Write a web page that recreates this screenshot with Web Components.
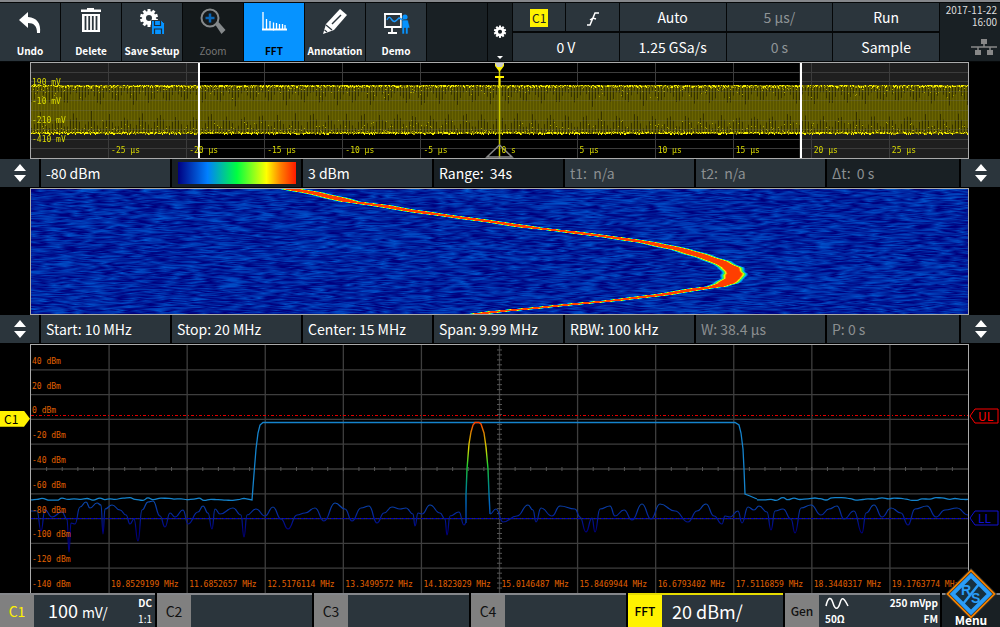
<!DOCTYPE html>
<html lang="en">
<head>
<meta charset="utf-8">
<meta name="viewport" content="width=device-width, initial-scale=1">
<title>Oscilloscope</title>
<style>
	:root {
		--panel: #2b353c;
		--panel-dark: #192024;
		--line: #85878b;
		--accent: #0693ff;
		--yellow: #fff200;
		--ui: "Noto Sans CJK SC", "Open Sans", sans-serif;
		--mono: "DejaVu Sans Mono", monospace;
	}
	body {
		margin: 0;
		background: #000;
		color: #fff;
		font-family: var(--ui);
	}
	channel-tab small { font-size: 14px; }
</style>
</head>
<body>
<scope-screen>
	<tool-bar slot="top">
		<tool-button icon="undo">Undo</tool-button>
		<tool-button icon="trash">Delete</tool-button>
		<tool-button icon="save">Save Setup</tool-button>
		<tool-button icon="zoom" disabled>Zoom</tool-button>
		<tool-button icon="fft" active>FFT</tool-button>
		<tool-button icon="pencil">Annotation</tool-button>
		<tool-button icon="demo">Demo</tool-button>
		<span></span>
		<tool-button icon="gear" aria-label="Toolbar settings"></tool-button>
		<scope-status></scope-status>
		<scope-clock date="2017-11-22" time="16:00"></scope-clock>
	</tool-bar>

	<overview-plot slot="overview"></overview-plot>

	<value-bar slot="levels">
		<value-cell>-80 dBm</value-cell>
		<value-cell scale dark></value-cell>
		<value-cell>3 dBm</value-cell>
		<value-cell dark>Range:&nbsp; 34s</value-cell>
		<value-cell muted>t1:&nbsp; n/a</value-cell>
		<value-cell muted>t2:&nbsp; n/a</value-cell>
		<value-cell muted dark>Δt:&nbsp; 0 s</value-cell>
	</value-bar>

	<waterfall-plot slot="waterfall"></waterfall-plot>

	<value-bar slot="span">
		<value-cell>Start: 10 MHz</value-cell>
		<value-cell>Stop: 20 MHz</value-cell>
		<value-cell>Center: 15 MHz</value-cell>
		<value-cell>Span: 9.99 MHz</value-cell>
		<value-cell>RBW: 100 kHz</value-cell>
		<value-cell muted>W: 38.4 µs</value-cell>
		<value-cell muted>P: 0 s</value-cell>
	</value-bar>

	<spectrum-plot slot="spectrum"></spectrum-plot>

	<channel-bar slot="bottom">
		<channel-tab name="C1" lit>
			<span>100 <small>mV/</small></span>
			<span slot="side">DC</span><span slot="side-sub">1:1</span>
		</channel-tab>
		<channel-tab name="C2"></channel-tab>
		<channel-tab name="C3"></channel-tab>
		<channel-tab name="C4"></channel-tab>
		<channel-tab name="FFT" active><span>20 dBm/</span></channel-tab>
		<channel-tab name="Gen" generator></channel-tab>
		<menu-button>Menu</menu-button>
	</channel-bar>
</scope-screen>

<script>
const GEAR = (() => {
	// ten square teeth around a ring
	let teeth = ""
	for (let i = 0; i < 10; i++) teeth += `<rect x="-1.5" y="-9" width="3" height="5" transform="rotate(${i * 36})"/>`
	return `${teeth}<circle r="5" fill="none" stroke="currentColor" stroke-width="4"/>`
})()

const ICONS = {
	undo: `<path d="M5 14 14 6v5c9 1 13 6 12 16h-3c0-7-3-10-9-10v5z" fill="currentColor"/>`,
	trash: `<path d="M6 3.5h6V2h7v1.5h7V6H6zM7 8h18v18H7z" fill="currentColor"/><path d="M10.5 10v14M14.2 10v14M17.8 10v14M21.5 10v14" stroke="var(--panel)" stroke-width="1.8"/>`,
	save: `<g transform="translate(13 12)" fill="currentColor">${GEAR}</g><path d="M15.5 14.5h10l3 3v11h-13z" fill="#0693ff" stroke="var(--panel)" stroke-width="1"/><path d="M18.5 15v4.5h6V15M18.5 28v-5h7v5" fill="none" stroke="#1d2b36" stroke-width="1.2"/>`,
	zoom: `<circle cx="13" cy="12" r="8.5" fill="none" stroke="currentColor" stroke-width="2"/><path d="M13 7.5v9M8.5 12h9" stroke="#0a66b5" stroke-width="2.5"/><path d="m18.500 19 3-3 7 8-4 4z" fill="currentColor"/>`,
	fft: `<path d="M5 6v18M8.5 13v11M12 15v9M15.5 16.5v8M18.5 17v7M21.5 18v6M24.5 18v6M27 19v5" stroke="currentColor" stroke-width="1.3"/><path d="M4 23.5h25" stroke="currentColor" stroke-width="2"/>`,
	pencil: `<path d="m4 28 3-10L21 3l7 6-13 15z" fill="currentColor"/><path d="m13 18 9-9" stroke="var(--panel)" stroke-width="1.5"/><path d="m7 19 6 5M5.5 24l2.5 2" stroke="var(--panel)" stroke-width="1.2"/>`,
	demo: `<path d="M4 8h17v13H5V8M12 21v6M8 27h9" fill="none" stroke="currentColor" stroke-width="1.8"/><path d="M7 14c2-4 3-3 5 0s4 1 7-2l6 3" fill="none" stroke="#1b9bff" stroke-width="1.5"/><circle cx="25" cy="11" r="2.6" fill="#0693ff"/><path d="M22 14h6l2 8h-2v6h-2.5v-6h-1v6H22z" fill="#0693ff" stroke="var(--panel)" stroke-width=".6"/>`,
	gear: `<g transform="translate(16 16)" fill="currentColor">${GEAR}</g>`,
	sine: `<svg width="24" height="12" viewBox="0 0 24 12" aria-hidden="true"><path d="M1 9c2-9 5-10 7-3s5 7 7 0 4-5 8 3" fill="none" stroke="currentColor" stroke-width="1.5"/></svg>`,
}

const define = (name, css, html, setup) => {
	const template = document.createElement("template")
	template.innerHTML = `<style>*{box-sizing:border-box}button{font:inherit;color:inherit;border:0;margin:0;padding:0;background:none;cursor:pointer}${css}</style>${html}`
	customElements.define(name, class extends HTMLElement {
		constructor() {
			super()
			this.attachShadow({ mode: "open" }).append(template.content.cloneNode(true))
		}
		connectedCallback() {
			setup?.(this, this.shadowRoot)
		}
	})
}

// small repeatable generator, so every load draws the same noise
const random = (seed) => () => {
	seed = (seed * 1664525 + 1013904223) >>> 0
	return seed / 4294967296
}

const lookup = (points, key, from, to) => {
	const i = Math.max(1, points.findIndex((p) => p[from] >= key))
	const a = points[i - 1]
	const b = points[i]
	return a[to] + ((b[to] - a[to]) * (key - a[from])) / (b[from] - a[from])
}

define("scope-screen", `
	:host {
		display: grid;
		min-height: 100vh;
		grid-template-rows: 62px minmax(97px, 97fr) 29px minmax(127px, 127fr) 29px minmax(249px, 249fr) 34px;
	}
`, `
	<slot name="top"></slot><slot name="overview"></slot><slot name="levels"></slot>
	<slot name="waterfall"></slot><slot name="span"></slot><slot name="spectrum"></slot><slot name="bottom"></slot>
`)

define("tool-bar", `
	:host {
		display: grid;
		grid-template-columns: repeat(8, minmax(0, 60fr)) minmax(0, 24fr) minmax(0, 426fr) minmax(0, 60fr);
		gap: 1px;
		border-top: 2px solid var(--line);
		padding-top: 1px;
		padding-bottom: 1px;
		background: #050708;
	}
	::slotted(span) { background: var(--panel-dark); }
`, `<slot></slot>`)

define("tool-button", `
	:host { display: block; min-width: 0; }
	button {
		width: 100%;
		height: 100%;
		display: flex;
		flex-direction: column;
		align-items: center;
		justify-content: space-between;
		padding: 3px 0;
		background: var(--panel);
		font-size: 10px;
		font-weight: bold;
		line-height: 14px;
		white-space: nowrap;
	}
	:host([active]) button { background: var(--accent); }
	:host([active]) .label { color: #000; }
	:host([disabled]) button { background: #14191b; color: #85898b; }
	:host([disabled]) .label { color: #777; font-weight: normal; }
	:host([icon=gear]) button { background: var(--panel-dark); justify-content: flex-end; gap: 14px; padding: 0 0 2px; }
	:host([icon=gear]) .label { width: 0; height: 0; border: 3px solid transparent; border-top-color: #fff; border-bottom: 0; }
	:host([icon=gear]) svg { width: 22px; height: 22px; flex: none; }
`, `<button type="button"><svg width="32" height="30" viewBox="0 0 32 30" aria-hidden="true"></svg><span class="label"><slot></slot></span></button>`,
(host, root) => {
	root.querySelector("svg").innerHTML = ICONS[host.getAttribute("icon")]
	root.querySelector("button").disabled = host.hasAttribute("disabled")
	if (host.ariaLabel) root.querySelector("button").ariaLabel = host.ariaLabel
})

define("scope-status", `
	:host {
		display: grid;
		grid-template: 1fr 1fr / repeat(8, 1fr);
		gap: 2px 1px;
		font-size: 14px;
	}
	button { grid-column: span 2; background: var(--panel); line-height: 20px; }
	.half { grid-column: span 1; }
	.muted { color: #8f9497; }
	b { display: inline-block; background: var(--yellow); color: #222; font-weight: normal; font-size: 12px; line-height: 18px; width: 18px; }
	svg { vertical-align: middle; }
`, `
	<button type="button" class="half" aria-label="Trigger source C1"><b>C1</b></button>
	<button type="button" class="half" aria-label="Rising edge"><svg width="12" height="14" viewBox="0 0 12 14"><path d="M0 13h3L8 1h4M3 8l3-2 3 1" fill="none" stroke="currentColor" stroke-width="1.5"/></svg></button>
	<button type="button">Auto</button>
	<button type="button" class="muted">5 µs/</button>
	<button type="button">Run</button>
	<button type="button">0 V</button>
	<button type="button">1.25 GSa/s</button>
	<button type="button" class="muted">0 s</button>
	<button type="button">Sample</button>
`)

define("scope-clock", `
	:host {
		display: flex;
		flex-direction: column;
		align-items: flex-end;
		background: var(--panel-dark);
		padding: 1px 3px 0 0;
		font-size: 10px;
		line-height: 12px;
		white-space: nowrap;
		color: #ddd;
	}
	svg { margin-top: 10px; }
`, `<span id="date"></span><span id="time"></span>
	<svg width="26" height="18" viewBox="0 0 26 18" aria-hidden="true"><path d="M10 1h6v5h-6zM4 12h6v5H4zM16 12h6v5h-6z" fill="#888"/><path d="M0 9h26M13 6v3M7 9v3M19 9v3" stroke="#888" stroke-width="1.5"/></svg>`,
(host, root) => {
	root.getElementById("date").textContent = host.getAttribute("date")
	root.getElementById("time").textContent = host.getAttribute("time")
})

const UP_DOWN = `<svg width="12" height="18" viewBox="0 0 12 18" aria-hidden="true"><path d="M6 0l6 7H0zM6 18l6-7H0z" fill="#fff"/></svg>`

define("value-bar", `
	:host {
		display: grid;
		grid-template-columns: 39px repeat(6, 129fr) 132fr 39px;
		column-gap: 2px;
		padding-bottom: 1px;
		font-size: 14px;
		line-height: 20px;
	}
	.step { background: var(--panel); display: grid; place-items: center; }
`, `<button type="button" class="step" aria-label="Move divider">${UP_DOWN}</button><slot></slot><button type="button" class="step" aria-label="Move divider">${UP_DOWN}</button>`)

define("value-cell", `
	:host { display: block; min-width: 0; }
	button { width: 100%; height: 100%; padding: 0 5px; text-align: left; background: var(--panel); white-space: nowrap; }
	:host([dark]) button { background: var(--panel-dark); }
	:host([muted]) button { color: #8b8f91; }
	:host([scale]) button { padding: 3px 5px 3px 6px; }
	i { display: none; height: 100%; background: linear-gradient(90deg, #000080, #0080ff 25%, #00ff40 50%, #ffff00 75%, #ff8000 87%, #ff1a00); }
	:host([scale]) i { display: block; }
`, `<button type="button"><i></i><slot></slot></button>`,
(host, root) => {
	if (host.hasAttribute("scale")) root.querySelector("button").ariaLabel = "Colour scale"
})

// the frame shared by the three plots
const PLOT = `
	:host { display: block; position: relative; padding: 0 31px 0 30px; min-height: 0; }
	.frame { position: relative; height: 100%; border: 1px solid #aaa; overflow: hidden; font: 8px/10px var(--mono); }
	.frame > svg, canvas { position: absolute; inset: 0; width: 100%; height: 100%; display: block; }
	.rows { position: absolute; inset: 0; display: flex; flex-direction: column; padding-left: 1px; }
	.cols { position: absolute; inset: 0; display: flex; align-items: flex-end; }
	.cols span { flex: 1 1 0; width: 0; padding-left: 2px; white-space: nowrap; }
`

const gridLines = (width, height) => {
	let lines = ""
	for (let i = 1; i < 12; i++) lines += `<path d="M${(width / 12) * i} 0v${height}"/>`
	for (let i = 1; i < 10; i++) lines += `<path d="M0 ${(height / 10) * i}h${width}"/>`
	return `<g stroke="#3e3e3e" stroke-width="1.3" fill="none">${lines}</g>`
}

define("overview-plot", PLOT + `
	.frame { color: #d8d800; background: linear-gradient(90deg, #1f1f1f 18%, #000 0 82%, #1f1f1f 0); }
	.rows { padding-top: 10px; padding-bottom: 8px; }
	.rows span { flex: 1; display: flex; align-items: center; }
	.cols { padding-bottom: 2px; }
`, `<div class="frame">
	<canvas width="937" height="95"></canvas>
	<svg viewBox="0 0 937 95" preserveAspectRatio="none">
		<path d="M168 0v95M770 0v95" stroke="#fff" stroke-width="2"/>
		<path d="M468.5 8v87" stroke="#c8c800" stroke-width="1.5"/>
		<path d="M464 0h9v3l-4.5 6-4.5-6z" fill="var(--yellow)"/><path d="M464 0h9l-2 4h-5z" fill="#ccc"/>
		<path d="M464 14h9M468.5 14v9" stroke="var(--yellow)" stroke-width="2"/>
		<path d="M468.5 82 481 94h-25z" fill="none" stroke="#888" stroke-width="1.5"/>
	</svg>
	<div class="rows"><span>190 mV</span><span>-10 mV</span><span>-210 mV</span><span>-410 mV</span></div>
	<div class="cols"><span></span><span>-25 µs</span><span>-20 µs</span><span>-15 µs</span><span>-10 µs</span><span>-5 µs</span><span>0 s</span><span>5 µs</span><span>10 µs</span><span>15 µs</span><span>20 µs</span><span>25 µs</span></div>
</div>`,
(host, root) => {
	const ctx = root.querySelector("canvas").getContext("2d")
	const rnd = random(7)
	const top = 22
	const bottom = 71
	ctx.fillStyle = "#3c3c3c"
	for (let i = 1; i < 12; i++) ctx.fillRect(Math.round((937 / 12) * i) - 1, 0, 1, 95)
	for (let i = 1; i < 10; i++) ctx.fillRect(0, Math.round(9.6 * i) - 1, 937, 1)
	for (let x = 0; x < 937; x++) {
		ctx.fillStyle = x % 3 === 1 ? "#6a6400" : "#5b5600"
		ctx.fillRect(x, top, 1, bottom - top)
		// gaps between periods lengthen and shorten as the samples beat
		const beatUp = Math.abs(((x / 17) % 1) - 0.5) * 2
		const beatDown = Math.abs((((x + 8) / 17) % 1) - 0.5) * 2
		if (x % 3 === 0) {
			ctx.fillStyle = "#353200"
			ctx.fillRect(x, top + 2, 1, 3 + 17 * beatUp * (0.6 + rnd() * 0.4))
			const h = 3 + 18 * beatDown * (0.6 + rnd() * 0.4)
			ctx.fillRect(x, bottom - 2 - h, 1, h)
		}
		for (const y of [top, bottom - 2]) {
			if (rnd() > 0.85) continue
			ctx.fillStyle = rnd() < 0.65 ? "#f5ee00" : "#a8a000"
			ctx.fillRect(x, y + (rnd() < 0.4 ? 1 : 0), 1, rnd() < 0.5 ? 2 : 1)
		}
		if (rnd() < 0.35) {
			ctx.fillStyle = "#a8a000"
			ctx.fillRect(x, top + 2 + Math.floor(rnd() * rnd() * 12), 1, 1)
			ctx.fillRect(x, bottom - 3 - Math.floor(rnd() * rnd() * 14), 1, 1)
		}
	}
	ctx.fillStyle = "rgba(110, 110, 90, .35)"
	for (const y of [28, 37, 47, 57, 66]) ctx.fillRect(0, y, 937, 1)
})

// carrier position, [x, y] down the waterfall
const SWEEP = [[262, 0], [280, 3], [302, 8], [318, 12], [349, 16], [372, 20], [399, 24], [429, 28], [466, 33], [499, 38], [536, 42], [582, 48], [616, 53], [649, 60], [669, 66], [687, 72], [699, 78], [703, 84], [701, 89], [694, 94], [685, 97], [669, 99], [632, 105], [582, 111], [549, 114], [499, 119], [466, 122], [434, 126]]

// jet colour map stops: value, red, green, blue
const JET = [[0, 0, 0, 125], [0.25, 0, 115, 235], [0.4, 0, 200, 220], [0.55, 60, 240, 60], [0.75, 250, 245, 0], [0.88, 255, 120, 0], [1, 255, 62, 0]]

define("waterfall-plot", PLOT, `<div class="frame"><canvas width="937" height="125" role="img" aria-label="Spectrogram"></canvas></div>`,
(host, root) => {
	const ctx = root.querySelector("canvas").getContext("2d")
	const image = ctx.createImageData(937, 125)
	const rnd = random(42)
	let last = null
	for (let y = 0; y < 125; y++) {
		const knots = Array.from({ length: 150 }, (_, i) => {
			const v = rnd()
			return last ? last[i] * 0.35 + v * 0.65 : v
		})
		last = knots
		const shift = rnd() * 7
		const centre = lookup(SWEEP, y, 1, 0)
		const half = 14 + Math.sin(y * 0.9)
		for (let x = 0; x < 937; x++) {
			const k = (x + shift) / 7
			const i = Math.floor(k)
			const noise = knots[i] + (knots[i + 1] - knots[i]) * (k - i)
			let value = Math.max(0, (noise - 0.18) * 0.24)
			const d = Math.abs(x - centre) / half
			if (d < 1) value = Math.max(value, Math.min(1, (1 - d) * 1.9))
			const at = (y * 937 + x) * 4
			for (let c = 0; c < 3; c++) image.data[at + c] = lookup(JET, value, 0, c + 1)
			image.data[at + 3] = 255
		}
	}
	ctx.putImageData(image, 0, 0)
})

// live spectrum, left and right of the carrier
const LIVE_LEFT = [[0, 166], [6, 166], [10, 186], [14, 165], [21, 172], [31, 167], [36, 174], [38, 207], [40, 178], [44, 179], [49, 162], [55, 157], [59, 163], [66, 158], [70, 160], [72, 189], [74, 164], [81, 160], [89, 165], [95, 170], [99, 179], [103, 174], [107, 196], [111, 165], [117, 157], [122, 156], [129, 171], [134, 182], [139, 168], [144, 172], [152, 165], [157, 179], [167, 167], [172, 161], [177, 168], [181, 184], [184, 164], [189, 169], [202, 163], [210, 170], [213, 192], [216, 170], [225, 164], [234, 171], [242, 162], [250, 174], [257, 184], [266, 170], [274, 168], [284, 163], [293, 176], [304, 158], [314, 164], [321, 176], [330, 163], [338, 161], [346, 178], [353, 168], [361, 162], [369, 164], [375, 163], [382, 169], [384, 181], [387, 168], [391, 169], [399, 160], [409, 168], [414, 174], [416, 190], [419, 171], [428, 167], [433, 180], [435, 178]]
const LIVE_RIGHT = [[459, 169], [465, 164], [472, 177], [486, 171], [497, 160], [502, 165], [505, 177], [510, 163], [521, 171], [529, 161], [544, 164], [549, 172], [555, 187], [561, 173], [564, 187], [569, 164], [579, 161], [584, 171], [593, 165], [601, 175], [611, 159], [620, 174], [629, 159], [644, 166], [657, 177], [666, 166], [675, 159], [683, 171], [691, 179], [694, 171], [699, 172], [707, 166], [711, 178], [717, 162], [723, 165], [728, 161], [736, 167], [740, 185], [744, 166], [752, 164], [760, 174], [764, 188], [770, 163], [780, 160], [790, 170], [798, 164], [806, 161], [813, 174], [823, 166], [831, 188], [835, 168], [843, 160], [851, 172], [860, 163], [870, 168], [877, 180], [884, 164], [896, 161], [905, 172], [914, 165], [926, 163], [937, 170]]

const smooth = (points) => {
	let d = `M${points[0]}`
	for (let i = 1; i < points.length; i++) {
		const [x0, y0] = points[i - 1]
		const [x1, y1] = points[i]
		const mid = (x0 + x1) / 2
		d += `C${mid} ${y0} ${mid} ${y1} ${x1} ${y1}`
	}
	return d
}

const maxHold = () => {
	const rnd = random(11)
	const floor = (from, to) => {
		const points = []
		for (let x = from; x < to; x += 5 + Math.floor(rnd() * 4)) points.push([x, (155.5 - rnd() * 3).toFixed(1)].map(Number))
		return smooth(points)
	}
	return `${floor(0, 218)}L221 155L223 129L225 104L227 88L229 80L232 77.5H704L708 80L710 88L712 104L713 124L714 149L719 151L726 154${floor(726, 945)}`
}

const ticks = () => {
	let d = ""
	for (let i = 1; i < 60; i++) d += `M${(937 / 60) * i} 122v4`
	for (let i = 1; i < 50; i++) d += `M466 ${(248 / 50) * i}h5`
	return d
}

define("spectrum-plot", PLOT + `
	.frame { color: #e06000; border-bottom: 0; }
	.rows span { flex: 1; display: flex; align-items: flex-end; padding-bottom: 3px; }
	.cols { padding-bottom: 3px; }
	.marker { position: absolute; display: flex; align-items: center; height: 16px; transform: translateY(-50%); font-size: 12px; line-height: 16px; }
	.source { left: 0; top: 30%; width: 30px; padding-left: 4px; color: #000; background: var(--yellow); clip-path: polygon(0 0, 24px 0, 100% 50%, 24px 100%, 0 100%); }
	.limit { right: 1px; width: 30px; padding-left: 9px; }
	.limit svg { position: absolute; inset: 0; }
	.upper { top: 29%; color: #f00; }
	.lower { top: 70%; color: #1010d0; }
`, `<div class="frame">
	<svg viewBox="0 0 937 248" preserveAspectRatio="none">
		<defs>
			<linearGradient id="heat" gradientUnits="userSpaceOnUse" x1="0" y1="77" x2="0" y2="180">
				<stop offset="0" stop-color="#ff3c00"/><stop offset=".12" stop-color="#d88a00"/><stop offset=".26" stop-color="#d8d800"/>
				<stop offset=".42" stop-color="#20d030"/><stop offset=".6" stop-color="#00907c"/><stop offset=".75" stop-color="#0070c0"/><stop offset="1" stop-color="#0030a0"/>
			</linearGradient>
			<linearGradient id="cold" gradientUnits="userSpaceOnUse" x1="0" y1="156" x2="0" y2="185">
				<stop offset="0" stop-color="#0c4fb4"/><stop offset=".5" stop-color="#04249a"/><stop offset="1" stop-color="#000080"/>
			</linearGradient>
		</defs>
		${gridLines(937, 248)}
		<path d="${ticks()}" stroke="#555" fill="none"/>
		<path d="M0 70.5h937" stroke="#e00000" stroke-dasharray="3 2 1 2"/>
		<path d="M0 173.5h937" stroke="#0000c8" stroke-dasharray="3 1 1 1"/>
		<path d="${smooth(LIVE_LEFT)}${smooth(LIVE_RIGHT)}" fill="none" stroke="url(#cold)" stroke-width="1.2"/>
		<path d="${maxHold()}" fill="none" stroke="#1583cc" stroke-width="1.3"/>
		<path d="M435 178V150L436 124L438 99L440 87L442 80L444 77.5H448L450 79L453 88L455 102L457 124L458 149L459 169" fill="none" stroke="url(#heat)" stroke-width="1.4"/>
	</svg>
	<div class="rows"><span>40 dBm</span><span>20 dBm</span><span>0 dBm</span><span>-20 dBm</span><span>-40 dBm</span><span>-60 dBm</span><span>-80 dBm</span><span>-100 dBm</span><span>-120 dBm</span><span>-140 dBm</span></div>
	<div class="cols"><span></span><span>10.8529199 MHz</span><span>11.6852657 MHz</span><span>12.5176114 MHz</span><span>13.3499572 MHz</span><span>14.1823029 MHz</span><span>15.0146487 MHz</span><span>15.8469944 MHz</span><span>16.6793402 MHz</span><span>17.5116859 MHz</span><span>18.3440317 MHz</span><span>19.1763774 MHz</span></div>
</div>
<div class="marker source">C1</div>
<div class="marker limit upper"><svg width="30" height="16"><path d="M1 8l5-7h23v14H6z" fill="none" stroke="currentColor"/></svg>UL</div>
<div class="marker limit lower"><svg width="30" height="16"><path d="M1 8l5-7h23v14H6z" fill="none" stroke="currentColor"/></svg>LL</div>`)

define("channel-bar", `
	:host { display: grid; grid-template-columns: repeat(6, 156fr) 58fr; column-gap: 1px; }
`, `<slot></slot>`)

define("channel-tab", `
	:host { display: block; min-width: 0; border-right: 1px solid #000; }
	button { width: 100%; height: 100%; display: grid; grid-template: 100% / 34px 1fr auto; text-align: left; white-space: nowrap; background: var(--panel); border-top: 2px solid var(--line); }
	.name { background: #808080; color: #111; display: grid; place-items: center; font-size: 14px; line-height: 20px; }
	:host([lit]) .name { color: var(--yellow); }
	:host([active]) .name { background: var(--yellow); color: #000; }
	:host([active]) button { border-top-color: #e6dc00; }
	:host([generator]) .name, :host([active]) .name { font-size: 12px; font-weight: 500; }
	.value { padding-left: 10px; align-self: center; font-size: 18px; line-height: 24px; }
	:host([lit]) .value { padding-left: 14px; }
	.side { display: flex; flex-direction: column; justify-content: space-between; align-items: flex-end; padding: 1px 3px 1px 0; font-size: 10px; line-height: 14px; }
	.gen { display: none; grid-column: 2 / 4; grid-template-columns: auto 1fr; align-content: space-between; align-items: center; padding: 1px 2px 1px 6px; font-size: 10px; font-weight: bold; line-height: 14px; }
	.gen :nth-child(even) { text-align: right; }
	:host([generator]) .gen { display: grid; }
	:host([generator]) .value, :host([generator]) .side { display: none; }
`, `<button type="button"><span class="name"></span><span class="value"><slot></slot></span><span class="side"><b><slot name="side"></slot></b><slot name="side-sub"></slot></span></button>`,
(host, root) => {
	root.querySelector(".name").textContent = host.getAttribute("name")
	if (host.hasAttribute("generator")) {
		root.querySelector("button").insertAdjacentHTML("beforeend", `<span class="gen">${ICONS.sine}<span>250 mVpp</span><span>50Ω</span><span>FM</span></span>`)
	}
})

define("menu-button", `
	:host { display: block; position: relative; }
	button { width: 100%; height: 100%; display: flex; align-items: flex-end; justify-content: center; background: var(--panel-dark); border-top: 2px solid var(--line); font-size: 12px; font-weight: bold; line-height: 14px; }
	svg { position: absolute; left: 50%; bottom: 6px; transform: translateX(-50%); }
	span { position: relative; }
	text { font: bold 14px "Liberation Sans", sans-serif; fill: #2a9df8; }
`, `<button type="button">
	<svg width="54" height="54" viewBox="0 0 54 54" aria-hidden="true">
		<path d="M27 1 53 27 27 53 1 27z" fill="#232b30"/>
		<path d="M27 3.5 50.5 27 27 50.5 3.5 27z" fill="#1b242a" stroke="#f08000" stroke-width="1.8"/>
		<path d="M27 8.5 45.5 27 27 45.5 8.5 27z" fill="#17303f" stroke="#2a9df8" stroke-width="4"/>
		<path d="m19 37 16-20" stroke="#2a9df8" stroke-width="2.5"/>
		<text x="17" y="28">R</text><text x="27" y="36">S</text>
	</svg><span><slot></slot></span></button>`)
</script>
</body>
</html>
